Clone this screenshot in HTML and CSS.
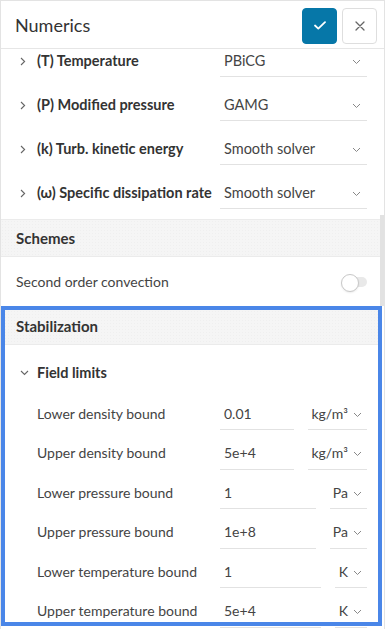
FILE: index.html
```html
<!DOCTYPE html>
<html lang="en">
<head>
<meta charset="utf-8">
<title>Numerics</title>
<link rel="stylesheet" href="styles.css">
</head>
<body>
<div class="window">
  <header class="head">
    <h1 class="title">Numerics</h1>
    <div class="actions">
      <button class="btn btn-ok" aria-label="Confirm">
        <svg width="12" height="9" viewBox="0 0 12 9"><polyline points="1,4.5 4.3,7.6 11,1.2" fill="none" stroke="#fff" stroke-width="1.8" stroke-linecap="round" stroke-linejoin="round"/></svg>
      </button>
      <button class="btn btn-close" aria-label="Close">
        <svg width="10" height="10" viewBox="0 0 10 10"><path d="M1 1L9 9M9 1L1 9" fill="none" stroke="#666" stroke-width="1.3" stroke-linecap="round"/></svg>
      </button>
    </div>
  </header>
  <div class="body">
    <div class="content">
      <div class="solvers">
        <div class="solver-row">
          <span class="caret"><svg width="6" height="9" viewBox="0 0 6 9"><polyline points="1,1 4.6,4.5 1,8" fill="none" stroke="#666" stroke-width="1.1"/></svg></span>
          <span class="solver-label">(T) Temperature</span>
          <div class="select"><span>PBiCG</span><svg class="dd" width="9" height="6" viewBox="0 0 9 6"><polyline points="1,1 4.5,4.5 8,1" fill="none" stroke="#888" stroke-width="1"/></svg></div>
        </div>
        <div class="solver-row">
          <span class="caret"><svg width="6" height="9" viewBox="0 0 6 9"><polyline points="1,1 4.6,4.5 1,8" fill="none" stroke="#666" stroke-width="1.1"/></svg></span>
          <span class="solver-label">(P) Modified pressure</span>
          <div class="select"><span>GAMG</span><svg class="dd" width="9" height="6" viewBox="0 0 9 6"><polyline points="1,1 4.5,4.5 8,1" fill="none" stroke="#888" stroke-width="1"/></svg></div>
        </div>
        <div class="solver-row">
          <span class="caret"><svg width="6" height="9" viewBox="0 0 6 9"><polyline points="1,1 4.6,4.5 1,8" fill="none" stroke="#666" stroke-width="1.1"/></svg></span>
          <span class="solver-label">(k) Turb. kinetic energy</span>
          <div class="select"><span>Smooth solver</span><svg class="dd" width="9" height="6" viewBox="0 0 9 6"><polyline points="1,1 4.5,4.5 8,1" fill="none" stroke="#888" stroke-width="1"/></svg></div>
        </div>
        <div class="solver-row">
          <span class="caret"><svg width="6" height="9" viewBox="0 0 6 9"><polyline points="1,1 4.6,4.5 1,8" fill="none" stroke="#666" stroke-width="1.1"/></svg></span>
          <span class="solver-label">(ω) Specific dissipation rate</span>
          <div class="select"><span>Smooth solver</span><svg class="dd" width="9" height="6" viewBox="0 0 9 6"><polyline points="1,1 4.5,4.5 8,1" fill="none" stroke="#888" stroke-width="1"/></svg></div>
        </div>
      </div>

      <section class="panel">
        <div class="panel-head">Schemes</div>
        <div class="toggle-row">
          <span>Second order convection</span>
          <span class="switch"></span>
        </div>
      </section>

      <section class="panel">
        <div class="panel-head panel-head-tall">Stabilization</div>
        <div class="group-row">
          <span class="caret"><svg width="9" height="6" viewBox="0 0 9 6"><polyline points="1,1 4.5,4.5 8,1" fill="none" stroke="#666" stroke-width="1.1"/></svg></span>
          <span class="group-label">Field limits</span>
        </div>
        <div class="fields">
          <div class="field-row">
            <span class="field-label">Lower density bound</span>
            <div class="input">0.01</div>
            <div class="unit"><span>kg/m³</span><svg class="dd" width="9" height="6" viewBox="0 0 9 6"><polyline points="1,1 4.5,4.5 8,1" fill="none" stroke="#888" stroke-width="1"/></svg></div>
          </div>
          <div class="field-row">
            <span class="field-label">Upper density bound</span>
            <div class="input">5e+4</div>
            <div class="unit"><span>kg/m³</span><svg class="dd" width="9" height="6" viewBox="0 0 9 6"><polyline points="1,1 4.5,4.5 8,1" fill="none" stroke="#888" stroke-width="1"/></svg></div>
          </div>
          <div class="field-row">
            <span class="field-label">Lower pressure bound</span>
            <div class="input">1</div>
            <div class="unit"><span>Pa</span><svg class="dd" width="9" height="6" viewBox="0 0 9 6"><polyline points="1,1 4.5,4.5 8,1" fill="none" stroke="#888" stroke-width="1"/></svg></div>
          </div>
          <div class="field-row">
            <span class="field-label">Upper pressure bound</span>
            <div class="input">1e+8</div>
            <div class="unit"><span>Pa</span><svg class="dd" width="9" height="6" viewBox="0 0 9 6"><polyline points="1,1 4.5,4.5 8,1" fill="none" stroke="#888" stroke-width="1"/></svg></div>
          </div>
          <div class="field-row">
            <span class="field-label">Lower temperature bound</span>
            <div class="input">1</div>
            <div class="unit"><span>K</span><svg class="dd" width="9" height="6" viewBox="0 0 9 6"><polyline points="1,1 4.5,4.5 8,1" fill="none" stroke="#888" stroke-width="1"/></svg></div>
          </div>
          <div class="field-row">
            <span class="field-label">Upper temperature bound</span>
            <div class="input">5e+4</div>
            <div class="unit"><span>K</span><svg class="dd" width="9" height="6" viewBox="0 0 9 6"><polyline points="1,1 4.5,4.5 8,1" fill="none" stroke="#888" stroke-width="1"/></svg></div>
          </div>
        </div>
      </section>
    </div>
    <div class="thumb"></div>
    <div class="highlight"></div>
  </div>
</div>
</body>
</html>
```
FILE: styles.css
```css
* { box-sizing: border-box; }
html, body { margin: 0; padding: 0; background: #fff; }
body {
  font-family: Lato, "Open Sans", "Liberation Sans", sans-serif;
  color: #333;
}
.window {
  width: 385px;
  height: 629px;
  border: 1px solid #e3e3e3;
  border-bottom: none;
  overflow: hidden;
  display: flex;
  flex-direction: column;
}
.head {
  height: 48px;
  flex: 0 0 48px;
  display: flex;
  align-items: center;
  justify-content: space-between;
  padding: 0 7px 0 14px;
  border-bottom: 1px solid #e6e6e6;
}
.title {
  margin: 0;
  font-size: 18px;
  font-weight: 400;
  color: #333;
}
.actions { display: flex; gap: 5px; margin-top: 2px; }
.btn {
  width: 35px;
  height: 36px;
  border-radius: 4px;
  padding: 0;
  display: flex;
  align-items: center;
  justify-content: center;
  cursor: pointer;
}
.btn-ok { background: #0677a8; border: 1px solid #0677a8; }
.btn-close { background: #fff; border: 1px solid #dedede; }

.body {
  position: relative;
  flex: 1;
  overflow: hidden;
}
.content { margin-right: 2px; }

.solvers { margin-top: -10px; padding-bottom: 4px; }
.solver-row {
  height: 44px;
  display: flex;
  align-items: flex-start;
  padding: 0 15px 0 19px;
}
.caret {
  flex: 0 0 17px;
  height: 44px;
  display: flex;
  align-items: center;
}
.caret svg { display: block; }
.solver-label {
  flex: 0 0 183px;
  padding-top: 12px;
  line-height: 20px;
  font-size: 14.5px;
  font-weight: 700;
  color: #333;
  white-space: nowrap;
}
.select {
  flex: 1;
  height: 38px;
  padding: 12px 6px 0 4px;
  line-height: 20px;
  font-size: 14.5px;
  color: #444;
  border-bottom: 1px solid #e2e2e2;
  display: flex;
  justify-content: space-between;
}
.dd { display: block; margin-top: 8px; flex: 0 0 auto; }

.panel-head {
  height: 38px;
  display: flex;
  align-items: center;
  padding: 0 15px;
  background-color: #f5f5f5;
  background-image: radial-gradient(rgba(0,0,0,0.025) 1px, transparent 1px);
  background-size: 3px 3px;
  border-top: 1px solid #ebebeb;
  border-bottom: 1px solid #ebebeb;
  font-size: 15px;
  font-weight: 700;
  color: #333;
}
.panel-head-tall { height: 39px; }
.toggle-row {
  height: 49px;
  display: flex;
  align-items: center;
  justify-content: space-between;
  padding: 0 15px;
  font-size: 14px;
  color: #444;
}
.switch {
  position: relative;
  width: 26px;
  height: 16px;
}
.switch::before {
  content: "";
  position: absolute;
  left: 6px;
  right: 0;
  top: 3px;
  height: 10px;
  border-radius: 5px;
  background: #e9e9e9;
}
.switch::after {
  content: "";
  position: absolute;
  left: 0;
  top: 0;
  width: 16px;
  height: 16px;
  border-radius: 50%;
  background: #fff;
  border: 1px solid #c8c8c8;
  box-shadow: 0 1px 2px rgba(0,0,0,0.08);
}

.group-row {
  height: 49px;
  display: flex;
  align-items: flex-start;
  padding: 17px 15px 0 19px;
}
.group-row .caret { height: 22px; }
.group-label {
  line-height: 22px;
  font-size: 14.5px;
  font-weight: 700;
  color: #333;
}

.field-row {
  height: 39.5px;
  display: flex;
  align-items: flex-start;
  gap: 14px;
  padding: 0 15px 0 36px;
  font-size: 14px;
  color: #444;
}
.field-label {
  flex: 0 0 169px;
  padding-top: 9.5px;
  line-height: 20px;
  white-space: nowrap;
}
.input {
  flex: 1;
  height: 36px;
  padding: 9.5px 0 0 4px;
  line-height: 20px;
  border-bottom: 1px solid #e2e2e2;
}
.unit {
  flex: 0 0 auto;
  min-width: 32px;
  height: 36px;
  padding: 9.5px 5px 0 3px;
  line-height: 20px;
  border-bottom: 1px solid #e2e2e2;
  display: flex;
  justify-content: flex-end;
  gap: 5px;
}

.thumb {
  position: absolute;
  right: 0;
  top: 166px;
  width: 4px;
  height: 91px;
  background: #e2e2e2;
}
.highlight {
  position: absolute;
  left: 0;
  top: 257px;
  width: 381px;
  height: 320px;
  border: 4px solid #4a86e8;
  pointer-events: none;
}
```
